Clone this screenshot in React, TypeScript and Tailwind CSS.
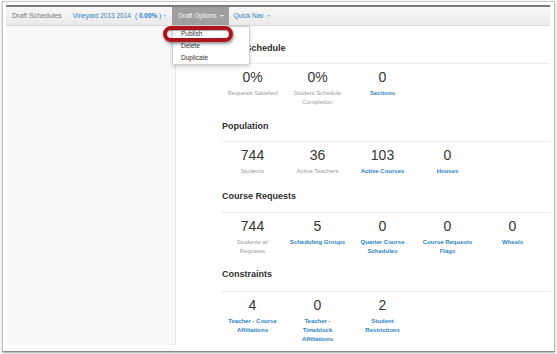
import React from "react";

type Stat = { n: string; label: React.ReactNode; link?: boolean };

function Caret({ className }: { className: string }) {
  return (
    <span
      className={
        "inline-block w-0 h-0 border-l-[2px] border-r-[2px] border-t-[2.5px] border-l-transparent border-r-transparent " +
        className
      }
    />
  );
}

function StatRow({ stats, h }: { stats: Stat[]; h: string }) {
  return (
    <div className={"grid grid-cols-[repeat(5,65px)] ml-[-2px] " + h}>
      {stats.map((s, i) => (
        <div key={i} className="flex flex-col items-center text-center">
          <div className="text-[14px] leading-[16px] text-[#363636]">{s.n}</div>
          <div
            className={
              "mt-[4px] text-[6px] leading-[9px] whitespace-nowrap " +
              (s.link ? "font-bold text-[#2b84c4]" : "text-[#9b9b9b]")
            }
          >
            {s.label}
          </div>
        </div>
      ))}
    </div>
  );
}

function Section({
  title,
  titleMt,
  divMt,
  stats,
  h,
}: {
  title: string;
  titleMt: string;
  divMt: string;
  stats: Stat[];
  h: string;
}) {
  return (
    <div className={titleMt}>
      <div className="text-[9px] leading-[12px] font-bold text-[#2f2f2f]">{title}</div>
      <div className={"border-t border-[#ececec] " + divMt} />
      <div className="pt-[5px]">
        <StatRow stats={stats} h={h} />
      </div>
    </div>
  );
}

export default function App() {
  return (
    <div className="w-[557px] h-[354px] bg-white overflow-hidden relative font-['Liberation_Sans',Arial,sans-serif]">
      <div className="ml-[2px] mt-[1px] w-[553px] h-[351px] border border-[#c6c6c6] border-b-[#8a8a8a] border-r-[#bdbdbd] shadow-[0_1px_2px_rgba(0,0,0,0.35)] bg-white pt-[3px] pl-[3px] pr-[4px] pb-[4px] flex flex-col">
        <nav className="flex items-stretch h-[21px] shrink-0 border-t-2 border-t-[#7a7a7a] border-b border-b-[#d8d8d8] bg-gradient-to-b from-[#f7f7f7] to-[#eaeaea] text-[6.5px]">
          <div className="flex items-center pl-[6px] text-[7px] text-[#7d7d7d]">Draft Schedules</div>
          <div className="flex items-center ml-[11px] text-[#2b85c6]">
            Vineyard 2013 2014
            <span className="ml-[4px]">
              ( <b>0.00%</b> )
            </span>
            <Caret className="ml-[2px] border-t-[#9cc2e2]" />
          </div>
          <div className="flex items-center ml-[5px] pl-[6px] pr-[5px] bg-[#9f9f9f] text-[#f5f5f5]">
            Draft Options
            <Caret className="ml-[3px] border-t-[#f5f5f5]" />
          </div>
          <div className="flex items-center ml-[5px] text-[#2b85c6]">
            Quick Nav
            <Caret className="ml-[3px] border-t-[#9cc2e2]" />
          </div>
        </nav>
        <div className="flex flex-1 min-h-0">
          <div className="ml-[1px] w-[169px] bg-[#f8f8f8] border-r border-[#e4e4e4] h-[319px]" />
          <div className="flex-1 pl-[46px]">
            <Section
              title="Draft Schedule"
              titleMt="mt-[16px]"
              divMt="mt-[9px]"
              h="h-[46px]"
              stats={[
                { n: "0%", label: "Requests Satisfied" },
                { n: "0%", label: <>Student Schedule<br />Completion</> },
                { n: "0", label: "Sections", link: true },
              ]}
            />
            <Section
              title="Population"
              titleMt="mt-[5px]"
              divMt="mt-[9px]"
              h="h-[38px]"
              stats={[
                { n: "744", label: "Students" },
                { n: "36", label: "Active Teachers" },
                { n: "103", label: "Active Courses", link: true },
                { n: "0", label: "Houses", link: true },
              ]}
            />
            <Section
              title="Course Requests"
              titleMt="mt-[5px]"
              divMt="mt-[10px]"
              h="h-[45px]"
              stats={[
                { n: "744", label: <>Students w/<br />Requests</> },
                { n: "5", label: "Scheduling Groups", link: true },
                { n: "0", label: <>Quarter Course<br />Schedules</>, link: true },
                { n: "0", label: <>Course Requests<br />Flags</>, link: true },
                { n: "0", label: "Wheels", link: true },
              ]}
            />
            <Section
              title="Constraints"
              titleMt="mt-[5px]"
              divMt="mt-[11px]"
              h="h-[46px]"
              stats={[
                { n: "4", label: <>Teacher - Course<br />Affiliations</>, link: true },
                { n: "0", label: <>Teacher -<br />Timeblock<br />Affiliations</>, link: true },
                { n: "2", label: <>Student<br />Restrictions</>, link: true },
              ]}
            />
          </div>
        </div>
      </div>

      {/* dropdown menu */}
      <div className="absolute left-[172px] top-[26px] w-[78px] h-[39px] bg-white border border-[#d0d0d0] shadow-[0_2px_4px_rgba(0,0,0,0.18)] rounded-b-[2px] pt-[1px] text-[6.5px] text-[#333]">
        <div className="h-[12px] leading-[12px] pl-[8px]">Publish</div>
        <div className="h-[12px] leading-[12px] pl-[8px]">Delete</div>
        <div className="h-[12px] leading-[12px] pl-[8px]">Duplicate</div>
      </div>

      {/* red callout */}
      <div className="absolute left-[163px] top-[26px] w-[70px] h-[16px] rounded-[8px] border-[4px] border-[#ab141b] shadow-[1px_2px_3px_rgba(0,0,0,0.4),inset_0_1px_1px_rgba(0,0,0,0.35)]" />
    </div>
  );
}
